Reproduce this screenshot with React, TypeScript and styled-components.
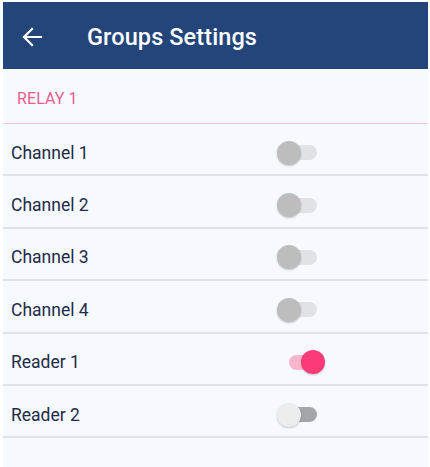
import React from "react";
import styled, { createGlobalStyle } from "styled-components";

const Global = createGlobalStyle`
  html, body { margin: 0; padding: 0; background: #ffffff; }
  body { font-family: Roboto, "Noto Sans", Arial, sans-serif; }
`;

const Screen = styled.div`
  margin: 2px 2px 0 3px;
  height: 465px;
  background: #f6f9fd;
  display: flex;
  flex-direction: column;
`;

const Header = styled.header`
  height: 67px;
  background: #23457a;
  display: flex;
  align-items: center;
  padding-left: 18px;
  padding-top: 2px;
  box-sizing: border-box;
  gap: 44px;
  color: #ffffff;
  flex-shrink: 0;
`;

const BackButton = styled.div`
  width: 22px;
  height: 22px;
  display: flex;
  align-items: center;
  justify-content: center;
`;

const Title = styled.h1`
  margin: 0;
  font-size: 23.5px;
  font-weight: 500;
  letter-spacing: 0.1px;
`;

const SectionTitle = styled.div`
  height: 55px;
  box-sizing: border-box;
  padding-top: 4px;
  border-bottom: 1px solid #f6c6d5;
  display: flex;
  align-items: center;
  padding-left: 14px;
  color: #ec5b8e;
  font-size: 16px;
  font-weight: 400;
  letter-spacing: 0.1px;
  flex-shrink: 0;
`;

const Row = styled.div`
  height: 52.4px;
  box-sizing: border-box;
  padding-top: 7px;
  border-bottom: 2px solid #dfe2e6;
  display: flex;
  align-items: center;
  padding-left: 8px;
  flex-shrink: 0;
`;

const Label = styled.span`
  font-size: 17.5px;
  color: #1e2b48;
  width: 254px;
`;

type Variant = "off" | "on" | "disabled";

const Track = styled.div<{ $variant: Variant }>`
  position: relative;
  width: 30px;
  height: 15px;
  border-radius: 8px;
  margin-left: ${(p) => (p.$variant === "on" ? "24px" : "22px")};
  background: ${(p) =>
    p.$variant === "on" ? "#f8b5cb" : p.$variant === "disabled" ? "#a4a5a8" : "#e1e2e5"};
`;

const Thumb = styled.div<{ $variant: Variant }>`
  position: absolute;
  top: 50%;
  width: 24px;
  height: 24px;
  border-radius: 50%;
  transform: translateY(-50%);
  left: ${(p) => (p.$variant === "on" ? "12px" : "-10px")};
  background: ${(p) =>
    p.$variant === "on" ? "#fb3a78" : p.$variant === "disabled" ? "#ededed" : "#bdbdbd"};
  box-shadow: 0 1px 2px rgba(0, 0, 0, 0.22);
`;

const Switch = ({ variant }: { variant: Variant }) => (
  <Track $variant={variant}>
    <Thumb $variant={variant} />
  </Track>
);

const rows: { label: string; variant: Variant }[] = [
  { label: "Channel 1", variant: "off" },
  { label: "Channel 2", variant: "off" },
  { label: "Channel 3", variant: "off" },
  { label: "Channel 4", variant: "off" },
  { label: "Reader 1", variant: "on" },
  { label: "Reader 2", variant: "disabled" },
];

export default function App() {
  return (
    <>
      <Global />
      <Screen>
        <Header>
          <BackButton>
            <svg width="22" height="22" viewBox="0 0 22 22" fill="none">
              <path
                d="M20 11H3M11 3l-8 8 8 8"
                stroke="#ffffff"
                strokeWidth="2.2"
                strokeLinecap="square"
              />
            </svg>
          </BackButton>
          <Title>Groups Settings</Title>
        </Header>
        <SectionTitle>RELAY 1</SectionTitle>
        {rows.map((r) => (
          <Row key={r.label}>
            <Label>{r.label}</Label>
            <Switch variant={r.variant} />
          </Row>
        ))}
      </Screen>
    </>
  );
}
